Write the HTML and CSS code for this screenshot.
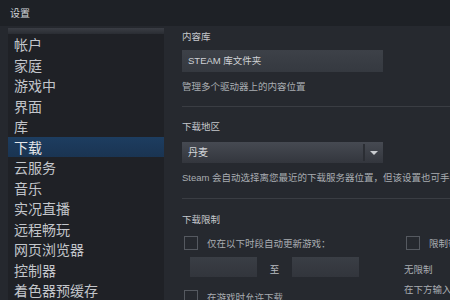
FILE: index.html
```html
<!DOCTYPE html>
<html lang="zh-CN">
<head>
    <meta charset="UTF-8">
    <title>设置</title>
    <link rel="stylesheet" href="styles.css">
</head>
<body>

<div class="window">
    <div class="titlebar">设置</div>

    <div class="main">
        <div class="sidebar">
            <div class="sidebar-top"></div>
            <ul class="nav">
                <li>帐户</li>
                <li>家庭</li>
                <li>游戏中</li>
                <li>界面</li>
                <li>库</li>
                <li class="active">下载</li>
                <li>云服务</li>
                <li>音乐</li>
                <li>实况直播</li>
                <li>远程畅玩</li>
                <li>网页浏览器</li>
                <li>控制器</li>
                <li>着色器预缓存</li>
            </ul>
        </div>

        <div class="content">
            <div class="section first">
                <div class="label">内容库</div>
                <div class="button-box">STEAM 库文件夹</div>
                <div class="note">管理多个驱动器上的内容位置</div>
            </div>

            <div class="section">
                <div class="label">下载地区</div>
                <div class="select-box">
                    <span>丹麦</span>
                    <span class="select-arrow"></span>
                </div>
                <div class="note nowrap">Steam 会自动选择离您最近的下载服务器位置，但该设置也可手动更改</div>
            </div>

            <div class="section last">
                <div class="label">下载限制</div>
                <div class="limits">
                    <div class="col">
                        <div class="check-row">
                            <span class="checkbox"></span>
                            <span>仅在以下时段自动更新游戏：</span>
                        </div>
                        <div class="time-row">
                            <span class="time-box"></span>
                            <span class="to">至</span>
                            <span class="time-box"></span>
                        </div>
                        <div class="check-row">
                            <span class="checkbox"></span>
                            <span>在游戏时允许下载</span>
                        </div>
                    </div>
                    <div class="col">
                        <div class="check-row">
                            <span class="checkbox"></span>
                            <span class="nowrap">限制带宽为：</span>
                        </div>
                        <div class="plain">无限制</div>
                        <div class="plain nowrap">在下方输入新值</div>
                    </div>
                </div>
            </div>
        </div>
    </div>
</div>

</body>
</html>
```

FILE: styles.css
```css
body {
    margin: 0;
    padding: 0;
    width: 450px;
    height: 300px;
    overflow: hidden;
    background-color: #25282e;
    font-family: "Liberation Sans", "Noto Sans CJK SC", sans-serif;
    color: #b9bdc2;
}

.window {
    height: 300px;
    display: flex;
    flex-direction: column;
}

.titlebar {
    height: 26px;
    line-height: 28px;
    padding-left: 10px;
    font-size: 10px;
    color: #d0d3d7;
    background-color: #1e2126;
    flex-shrink: 0;
}

.main {
    flex: 1;
    display: flex;
    min-height: 0;
}

.sidebar {
    width: 156px;
    margin-left: 8px;
    margin-top: 2px;
    background-color: #1f2126;
    flex-shrink: 0;
}

.sidebar-top {
    height: 6px;
    background: linear-gradient(#3a3d44, #2a2d33);
}

.nav {
    list-style: none;
    margin: 0;
    padding: 0;
}

.nav li {
    height: 20.5px;
    line-height: 20.5px;
    padding-left: 6px;
    font-size: 14px;
    color: #c3c6cb;
    font-family: "Noto Sans CJK SC", sans-serif;
}

.nav li.active {
    background: linear-gradient(#1d3d60, #1a3452);
    color: #e4e7ea;
}

.content {
    flex: 1;
    padding: 0 0 0 18px;
    background-color: #26292f;
    min-width: 0;
}

.section {
    padding-top: 12px;
    padding-bottom: 13px;
    border-bottom: 1px solid #3a3d43;
}

.section.first {
    padding-top: 3px;
    padding-bottom: 12px;
}

.section.last {
    padding-top: 13px;
    border-bottom: none;
}

.label {
    font-size: 9.5px;
    color: #c5c8cc;
    height: 16px;
    line-height: 16px;
    margin-bottom: 7px;
}

.first .label {
    margin-bottom: 5px;
}

.button-box {
    width: 195px;
    height: 22px;
    line-height: 22px;
    padding-left: 6px;
    font-size: 9.5px;
    color: #cfd2d6;
    background: linear-gradient(#3d4148, #353940);
}

.select-box {
    width: 195px;
    height: 21px;
    line-height: 21px;
    padding-left: 6px;
    font-size: 10px;
    color: #d2d5d9;
    background: linear-gradient(#464a52, #33363d);
    display: flex;
    justify-content: space-between;
}

.select-arrow {
    width: 18px;
    border-left: 2px solid #2b2e34;
    margin: 2px 0;
    position: relative;
}

.select-arrow::after {
    content: "";
    position: absolute;
    left: 5px;
    top: 7px;
    border-left: 4px solid transparent;
    border-right: 4px solid transparent;
    border-top: 4px solid #c9ccd0;
}

.note {
    font-size: 9.5px;
    color: #a9adb2;
    margin-top: 8px;
    height: 14px;
    line-height: 14px;
}

.nowrap {
    white-space: nowrap;
}

.limits {
    display: grid;
    grid-template-columns: 222px 1fr;
}

.check-row {
    display: flex;
    align-items: center;
    gap: 9px;
    height: 16px;
    font-size: 9.5px;
    color: #a9adb2;
    margin-left: 2px;
    white-space: nowrap;
}

.checkbox {
    width: 12px;
    height: 12px;
    border: 1px solid #555960;
    flex-shrink: 0;
}

.time-row {
    display: flex;
    align-items: center;
    margin: 6px 0 12px 8px;
    height: 20px;
}

.time-box {
    width: 67px;
    height: 20px;
    background: linear-gradient(#3a3e45, #32353c);
}

.to {
    width: 35px;
    text-align: center;
    font-size: 9.5px;
    color: #b9bdc2;
    padding-top: 4px;
}

.plain {
    font-size: 9.5px;
    color: #a9adb2;
    height: 20px;
    line-height: 20px;
}

.col .check-row + .plain {
    margin-top: 9px;
}
```
